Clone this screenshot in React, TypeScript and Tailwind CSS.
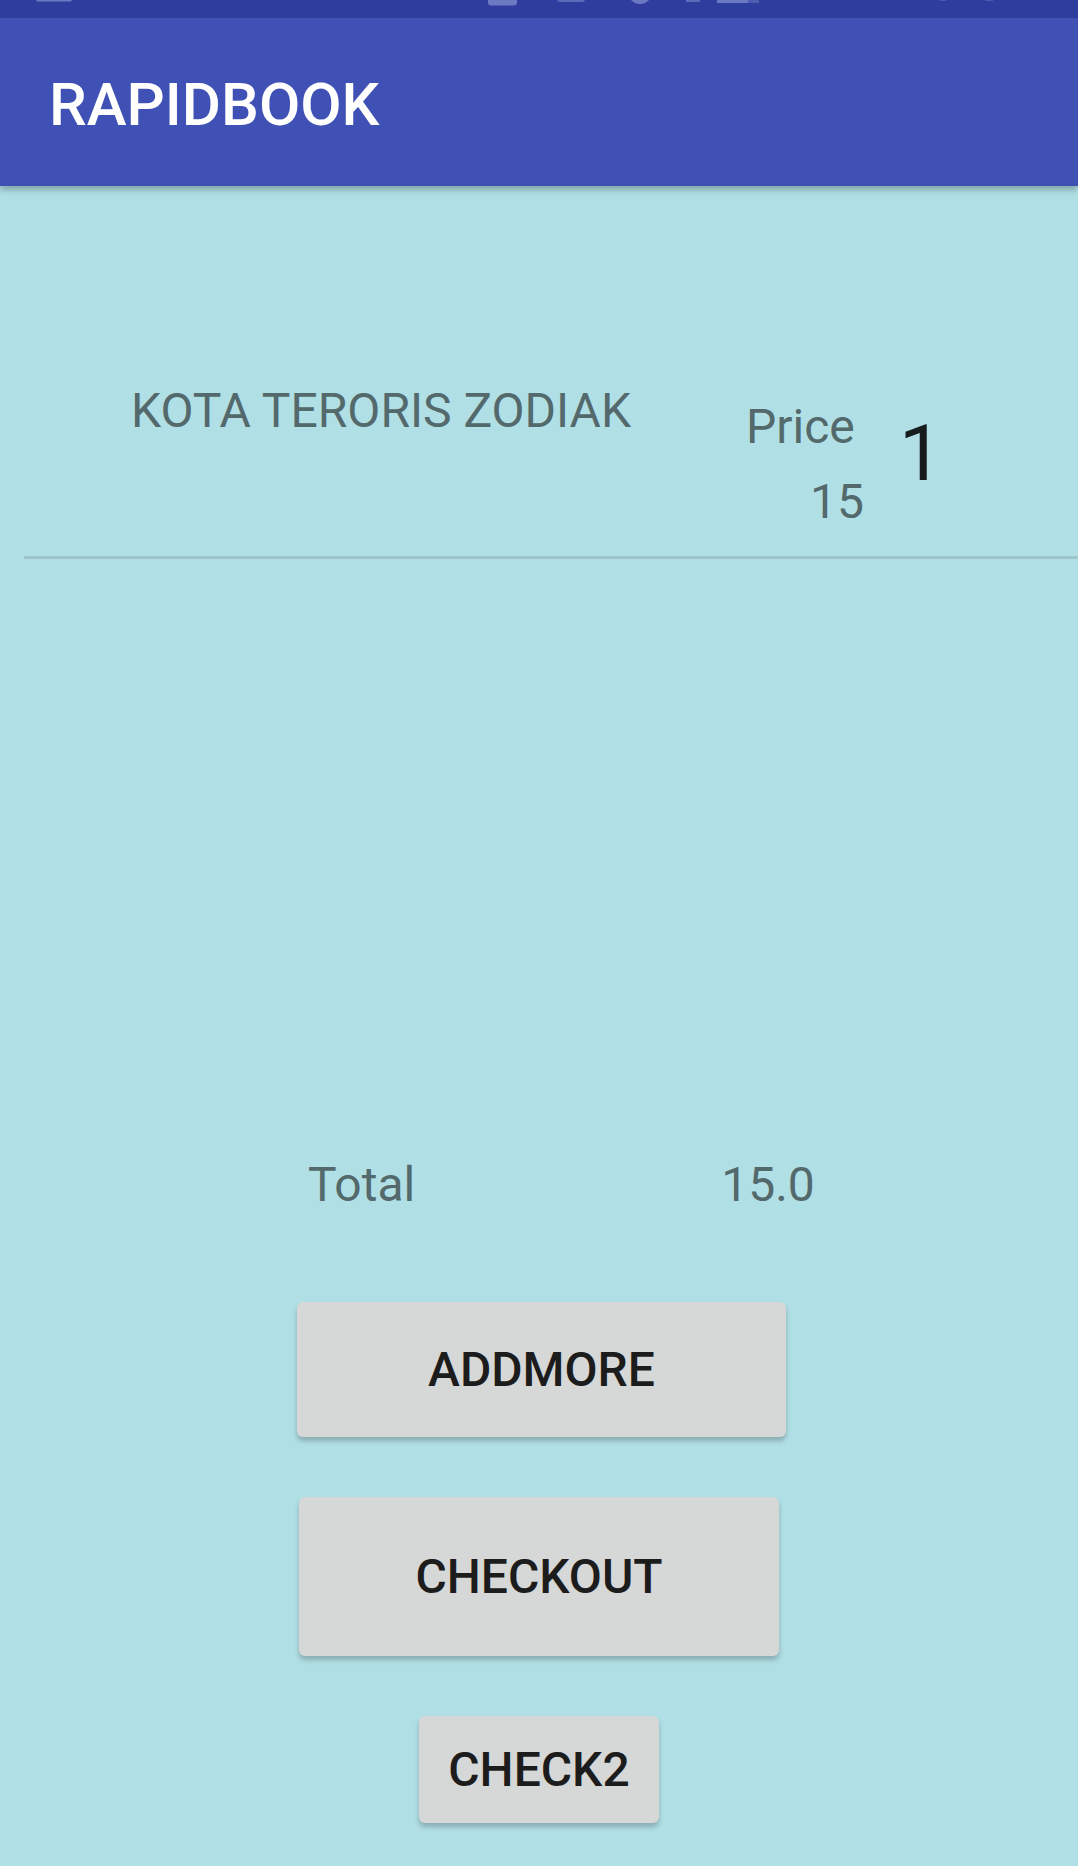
import React from "react";

const font = { fontFamily: "Roboto, 'Noto Sans', 'Liberation Sans', sans-serif" };

function StatusBar() {
  // only the bottom edges of the status icons show in the picture
  return (
    <div className="h-[18px] bg-[#2f3e9e]">
      <svg width="1078" height="18" viewBox="0 0 1078 18" className="block">
        <rect x="36" y="-6" width="36" height="7.5" rx="2" fill="#6b78c2" />
        <rect x="488" y="-10" width="29" height="15.5" rx="3" fill="#6b78c2" />
        <rect x="557" y="-10" width="28" height="12" rx="3" fill="#5e6bba" />
        <circle cx="640" cy="-8" r="12" fill="#6b78c2" />
        <rect x="686" y="-6" width="14" height="8" fill="#5e6bba" />
        <rect x="717" y="-6" width="31" height="9" fill="#6b78c2" />
        <rect x="748" y="-6" width="11" height="9" fill="#4f5cb0" />
        <rect x="940" y="-6" width="6" height="7" fill="#4a58ad" />
        <rect x="985" y="-6" width="8" height="7" fill="#4a58ad" />
      </svg>
    </div>
  );
}

function AppBar() {
  return (
    <div className="relative z-10 h-[168px] bg-[#3f51b5] pl-[49px] pt-[57px] shadow-[0_4px_6px_rgba(0,0,0,0.25)]">
      <div className="text-[60px] leading-none font-medium text-white">RAPIDBOOK</div>
    </div>
  );
}

function BookRow() {
  return (
    <div className="ml-[24px] border-b-[3px] border-[#9cc6cc] h-[373px] flex items-start">
      <div className="ml-[107px] mt-[201px] text-[48px] leading-none text-[#53696c]">
        KOTA TERORIS ZODIAK
      </div>
      <div className="ml-[115px] mt-[217px] flex flex-col text-[48px] leading-none text-[#53696c]">
        <span>Price</span>
        <span className="ml-[64px] mt-[27px]">15</span>
      </div>
      <div className="ml-[35px] mt-[229px] text-[78px] leading-none text-[#171d1e]">1</div>
    </div>
  );
}

function Btn({ label, w, h }: { label: string; w: string; h: string }) {
  return (
    <button
      type="button"
      className={`${w} ${h} flex items-center justify-center rounded-[6px] bg-[#d6d8d8] text-[48px] leading-none font-medium text-[#1c1c1c] shadow-[0_4px_5px_rgba(0,0,0,0.22)]`}
    >
      {label}
    </button>
  );
}

export default function App() {
  return (
    <div className="w-[1078px] h-[1866px] overflow-hidden bg-[#b0dfe5]" style={font}>
      <StatusBar />
      <AppBar />
      <BookRow />
      <div className="mt-[602px] flex text-[48px] leading-none text-[#53696c]">
        <span className="ml-[308px]">Total</span>
        <span className="ml-[306px]">15.0</span>
      </div>
      <div className="mt-[93px] flex flex-col items-center">
        <div className="ml-[5px]">
          <Btn label="ADDMORE" w="w-[489px]" h="h-[135px]" />
        </div>
        <div className="mt-[60px]">
          <Btn label="CHECKOUT" w="w-[480px]" h="h-[159px]" />
        </div>
        <div className="mt-[60px]">
          <Btn label="CHECK2" w="w-[240px]" h="h-[107px]" />
        </div>
      </div>
    </div>
  );
}
